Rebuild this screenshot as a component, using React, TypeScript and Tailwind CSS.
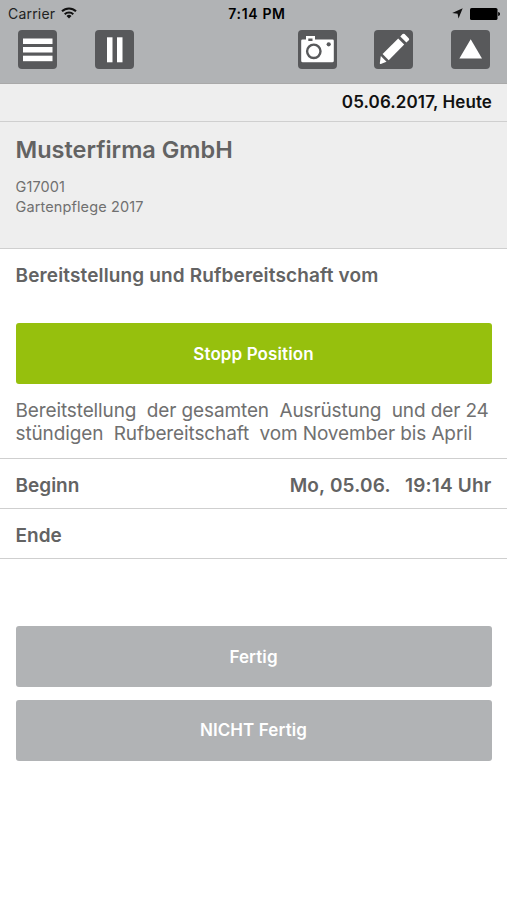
import React from "react";

const TILE = "h-[39px] w-[39px] shrink-0 rounded bg-[#58595b]";

const App = () => {
  return (
    <div className="min-h-[900px] w-full bg-white font-['Inter',sans-serif] text-[#636363]">
      {/* HEADER */}
      <header className="h-[84px] border-b border-[#a9a9a9] bg-[#b1b3b5]">
        {/* Status bar */}
        <div className="grid h-[30px] grid-cols-3 items-start pt-1 pr-[7px] pl-2 text-black">
          <div className="flex items-center gap-[6px]">
            <span className="text-[14px] leading-5 tracking-[0.2px] text-[#222]">Carrier</span>
            <svg className="mb-[2px] h-[12px] w-[16px]" viewBox="0 0 16 12" fill="none" stroke="#111" strokeWidth="2">
              <path d="M1 4.3a10 10 0 0 1 14 0" />
              <path d="M3.7 7.2a6.2 6.2 0 0 1 8.6 0" />
              <path d="M8 11.6 5.5 9a3.6 3.6 0 0 1 5 0z" fill="#111" stroke="none" />
            </svg>
          </div>
          <span className="pl-[6px] text-center text-[14px] leading-5 font-semibold tracking-[0.65px]">7:14 PM</span>
          <div className="flex h-[19px] items-center justify-end gap-[7px]">
            <svg className="h-[11px] w-[11px]" viewBox="0 0 11 11">
              <path d="M10.7.3 6.5 10.6 5.6 5.8.2 5.1z" fill="#111" />
            </svg>
            <svg className="h-[12px] w-[30px]" viewBox="0 0 30 12">
              <rect x="0" y="0" width="27.5" height="12" rx="1.6" />
              <path d="M28.2 4c2.4.4 2.4 3.6 0 4z" />
            </svg>
          </div>
        </div>

        {/* Toolbar */}
        <div className="flex justify-between pr-[17px] pl-[18px]">
          <div className="flex gap-[38px]">
            <button className={TILE} aria-label="Menu">
              <svg viewBox="0 0 39 39" fill="#fff">
                <rect x="5" y="8.5" width="29.5" height="5.5" />
                <rect x="5" y="17" width="29.5" height="5.5" />
                <rect x="5" y="25.7" width="29.5" height="5.5" />
              </svg>
            </button>
            <button className={TILE} aria-label="Pause">
              <svg viewBox="0 0 39 39" fill="#fff">
                <rect x="12" y="7.3" width="5.5" height="25" />
                <rect x="22" y="7.3" width="5.5" height="25" />
              </svg>
            </button>
          </div>
          <div className="flex">
            <button className={TILE} aria-label="Foto">
              <svg viewBox="0 0 39 39">
                <path d="M4.5 9.5H8V6h9v3.5h17.5q1.3 0 1.3 1.3v20q0 1.5-1.5 1.5H4.7q-1.5 0-1.5-1.5v-20q0-1.3 1.3-1.3z" fill="#fff" />
                <rect x="10.3" y="8.5" width="4.2" height="2.5" fill="#58595b" />
                <circle cx="15.8" cy="21.3" r="6.7" fill="none" stroke="#58595b" strokeWidth="2.4" />
                <circle cx="30.7" cy="14.3" r="2.1" fill="#58595b" />
              </svg>
            </button>
            <button className={`${TILE} mr-[38px] ml-[37px]`} aria-label="Bearbeiten">
              <svg viewBox="0 0 39 39" fill="#fff">
                <path d="m24.2 8.4 6 6.2L14.7 30.2l-6.1-6.1z" />
                <path d="m26.3 6.5 2.3-2.4q1-.9 2 0l4.1 4.1q1 1 .1 2l-2.4 2.4z" />
                <path d="m6.8 26 5.7 5.7-5.7 2.2q-.9.3-1-.6z" />
              </svg>
            </button>
            <button className={TILE} aria-label="Nach oben">
              <svg viewBox="0 0 39 39" fill="#fff">
                <path d="M19.7 9.2 31 28.5H8.4z" />
              </svg>
            </button>
          </div>
        </div>
      </header>

      {/* DATE */}
      <div className="flex h-[38px] items-center justify-end border-b border-[#cfcfcf] bg-[#eee] pt-px pr-[15px]">
        <span className="text-[17px] font-semibold tracking-[0.1px] text-[#111]">05.06.2017, Heute</span>
      </div>

      {/* CUSTOMER */}
      <section className="h-[127px] border-b border-[#cfcfcf] bg-[#eee] px-[15.5px] pt-[13px]">
        <h1 className="text-[23.5px] leading-[30px] font-semibold">Musterfirma GmbH</h1>
        <div className="mt-[12px] text-[14.5px] leading-[19.5px] tracking-[0.12px] text-[#707070]">
          <p>G17001</p>
          <p>Gartenpflege 2017</p>
        </div>
      </section>

      {/* POSITION */}
      <section className="h-[210px] border-b border-[#cfcfcf] px-[15.5px] pt-[14px]">
        <h2 className="text-[19px] leading-[26px] font-semibold tracking-[0.14px]">
          Bereitstellung und Rufbereitschaft vom
        </h2>
        <button className="mt-[34px] h-[61px] w-full rounded-[3px] bg-[#96c00d] pt-[2px] text-[17px] font-semibold tracking-[0.1px] text-white">
          Stopp Position
        </button>
        <p className="mt-[15px] text-[19px] leading-[23px] tracking-[-0.12px] whitespace-pre text-[#707070]">
          {"Bereitstellung  der gesamten  Ausrüstung  und der 24\nstündigen  Rufbereitschaft  vom November bis April"}
        </p>
      </section>

      {/* TIMES */}
      <div className="flex h-[50px] items-center justify-between border-b border-[#cfcfcf] px-[15.5px] pt-[5px] text-[19px] font-semibold">
        <span>Beginn</span>
        <span className="tracking-[0.17px] whitespace-pre">{"Mo, 05.06.   19:14 Uhr"}</span>
      </div>
      <div className="flex h-[50px] items-center border-b border-[#cfcfcf] px-[15.5px] pt-[5px] text-[19px] font-semibold">
        <span>Ende</span>
      </div>

      {/* ACTIONS */}
      <div className="flex flex-col gap-[12px] px-[15.5px] pt-[67px] text-[17px] font-semibold tracking-[0.1px] text-white">
        <button className="h-[61px] rounded-[3px] bg-[#b1b3b5] pt-[2px]">Fertig</button>
        <button className="mt-px h-[61px] rounded-[3px] bg-[#b1b3b5] pt-px">NICHT Fertig</button>
      </div>
    </div>
  );
};

export default App;
